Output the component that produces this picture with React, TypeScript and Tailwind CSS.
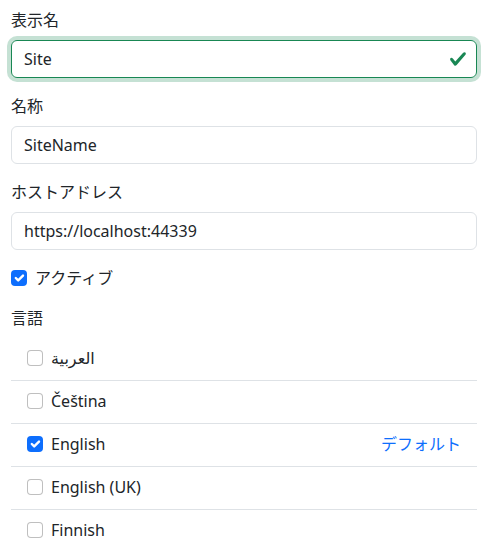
import React from 'react';

const langs = [
  { name: 'العربية', checked: false },
  { name: 'Čeština', checked: false },
  { name: 'English', checked: true, isDefault: true },
  { name: 'English (UK)', checked: false },
  { name: 'Finnish', checked: false },
];

function Check({ checked }: { checked: boolean }) {
  if (checked) {
    return (
      <span className="mt-1 flex h-4 w-4 shrink-0 items-center justify-center rounded-[4px] bg-[#0d6efd]">
        <svg viewBox="0 0 20 20" className="h-4 w-4" fill="none">
          <path d="m6 10 3 3 6-6" stroke="#fff" strokeWidth="3" strokeLinecap="round" strokeLinejoin="round" />
        </svg>
      </span>
    );
  }
  return <span className="mt-1 block h-4 w-4 shrink-0 rounded-[4px] border border-black/25 bg-white" />;
}

function Field({ label, value, valid }: { label: string; value: string; valid?: boolean }) {
  return (
    <div className="mb-4">
      <div className="mb-2 leading-6">{label}</div>
      <div
        className={
          valid
            ? 'flex h-[38px] items-center rounded-[6px] border border-[#198754] pl-3 pr-[9px] ring-4 ring-[#198754]/25'
            : 'flex h-[38px] items-center rounded-[6px] border border-[#dee2e6] px-3'
        }
      >
        <span className="flex-1 leading-6">{value}</span>
        {valid && (
          <svg viewBox="0 0 8 8" className="h-[18px] w-[18px]">
            <path
              fill="#198754"
              d="M2.3 6.73.6 4.53c-.4-1.04.46-1.4 1.1-.8l1.1 1.4 3.4-3.8c.6-.63 1.6-.27 1.2.7l-4 4.6c-.43.5-.8.4-1.1.1z"
            />
          </svg>
        )}
      </div>
    </div>
  );
}

export default function App() {
  return (
    <div
      className="min-h-[548px] bg-white pl-[11px] pr-[13px] pt-2 text-base text-[#212529]"
      style={{ fontFamily: '"Segoe UI", "Noto Sans", "Noto Sans CJK JP", "DejaVu Sans", sans-serif' }}
    >
      <Field label="表示名" value="Site" valid />
      <Field label="名称" value="SiteName" />
      <Field label="ホストアドレス" value="https://localhost:44339" />

      {/* active */}
      <div className="mb-4 flex gap-2 leading-6">
        <Check checked />
        <span>アクティブ</span>
      </div>

      <div className="mb-2 leading-6">言語</div>
      <ul>
        {langs.map((l, i) => (
          <li
            key={l.name}
            className={
              'flex items-start justify-between px-4 py-2 ' +
              (i < langs.length - 1 ? 'border-b border-[#dee2e6]' : '')
            }
          >
            <div className="mb-[2px] flex gap-2 leading-6">
              <Check checked={l.checked} />
              <span>{l.name}</span>
            </div>
            {l.isDefault && <span className="leading-6 text-[#0d6efd]">デフォルト</span>}
          </li>
        ))}
      </ul>
    </div>
  );
}
